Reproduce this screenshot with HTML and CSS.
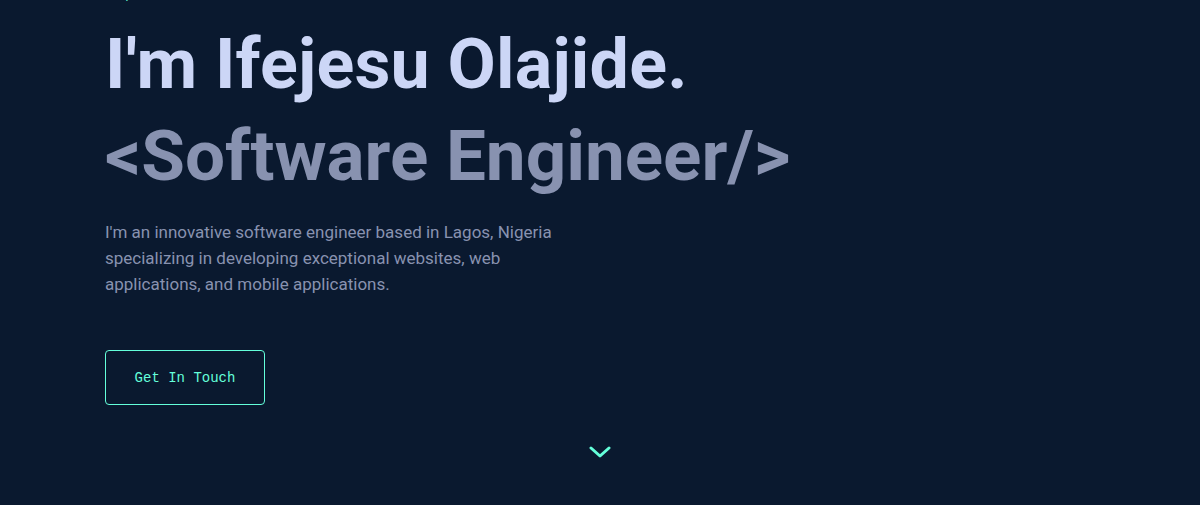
FILE: index.html
```html
<!DOCTYPE html>
<html lang="en">
<head>
    <meta charset="UTF-8">
    <meta name="viewport" content="width=device-width, initial-scale=1.0">
    <title>Ifejesu Olajide</title>
    <link rel="stylesheet" href="styles.css">
</head>
<body>
    <section class="hero">
        <p class="intro">Hi, there</p>
        <h1 class="name">I'm Ifejesu Olajide.</h1>
        <h2 class="role">&lt;Software Engineer/&gt;</h2>
        <p class="about">I'm an innovative software engineer based in Lagos, Nigeria specializing in developing exceptional websites, web applications, and mobile applications.</p>
        <a class="cta" href="#contact">Get In Touch</a>
        <div class="scroll-down">
            <svg width="22" height="14" viewBox="0 0 22 14" fill="none">
                <path d="M2 3 L11 11 L20 3" stroke="#64ffda" stroke-width="3" stroke-linecap="round" stroke-linejoin="round"/>
            </svg>
        </div>
    </section>
</body>
</html>
```

FILE: styles.css
```css
body {
    margin: 0;
    background-color: #0a192f;
    font-family: Roboto, "Noto Sans", sans-serif;
    height: 505px;
    overflow: hidden;
}
.hero {
    padding-left: 105px;
    margin-top: -16px;
}
.intro {
    margin: 0 0 14px;
    color: #64ffda;
    font-family: "Liberation Mono", monospace;
    font-size: 16px;
    line-height: 20px;
}
.name {
    margin: 0;
    color: #ccd6f6;
    font-size: 70px;
    font-weight: 700;
    line-height: 92px;
    letter-spacing: 0.2px;
}
.role {
    margin: 0;
    color: #8892b0;
    font-size: 71px;
    font-weight: 700;
    line-height: 92px;
}
.about {
    margin: 17px 0 0;
    max-width: 480px;
    color: #8892b0;
    font-size: 17px;
    line-height: 26px;
}
.cta {
    display: inline-flex;
    align-items: center;
    justify-content: center;
    margin-top: 53px;
    width: 160px;
    height: 55px;
    box-sizing: border-box;
    border: 1px solid #64ffda;
    border-radius: 4px;
    color: #64ffda;
    font-family: "Liberation Mono", monospace;
    font-size: 14px;
    text-decoration: none;
}
.scroll-down {
    display: flex;
    justify-content: center;
    margin-left: -105px;
    margin-top: 40px;
}
```
